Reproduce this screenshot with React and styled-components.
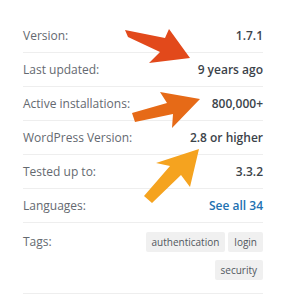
import React from 'react'
import styled, { createGlobalStyle } from 'styled-components'

const Global = createGlobalStyle`
    body {
        margin: 0;
        background: #fff;
        font-family: "Open Sans", "Noto Sans", sans-serif;
    }
    * {
        box-sizing: border-box;
    }
`

const Page = styled.div`
    position: relative;
    width: 288px;
    height: 300px;
    overflow: hidden;
`

const List = styled.ul`
    list-style: none;
    margin: 0;
    padding: 19px 25px 0 23px;
`

const Row = styled.li`
    display: flex;
    justify-content: space-between;
    align-items: ${p => (p.top ? 'flex-start' : 'center')};
    height: ${p => (p.top ? 'auto' : '34px')};
    padding: ${p => (p.top ? '9px 0 13px' : '0')};
    border-bottom: 1px solid #eeeeee;
    font-size: 12px;
`

const Label = styled.span`
    color: #646970;
    line-height: 20px;
`

const Value = styled.strong`
    color: #3c434a;
    font-weight: 600;
`

const Link = styled.a`
    color: #2271b1;
    font-weight: 600;
    text-decoration: none;
`

const Tags = styled.div`
    display: flex;
    flex-wrap: wrap;
    justify-content: flex-end;
    width: 118px;
    column-gap: 3px;
    row-gap: 8px;
`

const Tag = styled.span`
    background: #f0f0f0;
    color: #50575e;
    font-size: 10px;
    line-height: 20px;
    padding: 0 6px;
    border-radius: 2px;
`

const Overlay = styled.svg`
    position: absolute;
    left: 0;
    top: 0;
    pointer-events: none;
`

// arrows drawn over the list, points traced from the screenshot
const arrows = [
    {
        color: '#e2491b',
        points: '125,30 165,38 169,29 190,58 149,63 160,52 128,37',
    },
    {
        color: '#e66a17',
        points: '132,113 167,103 160,92 200,99 172,128 173,114 135,122',
    },
    {
        color: '#f5a31f',
        points: '199,149 156,163 170,166 144,196 152,203 181,175 190,187',
    },
]

const rows = [
    ['Version:', '1.7.1'],
    ['Last updated:', '9 years ago'],
    ['Active installations:', '800,000+'],
    ['WordPress Version:', '2.8 or higher'],
    ['Tested up to:', '3.3.2'],
]

export default function App() {
    return (
        <Page>
            <Global />
            <List>
                {rows.map(([label, value]) => (
                    <Row key={label}>
                        <Label>{label}</Label>
                        <Value>{value}</Value>
                    </Row>
                ))}
                <Row>
                    <Label>Languages:</Label>
                    <Link href="#">See all 34</Link>
                </Row>
                <Row top>
                    <Label>Tags:</Label>
                    <Tags>
                        <Tag>authentication</Tag>
                        <Tag>login</Tag>
                        <Tag>security</Tag>
                    </Tags>
                </Row>
            </List>
            <Overlay width="288" height="300">
                {arrows.map(a => (
                    <polygon key={a.color} points={a.points} fill={a.color} />
                ))}
            </Overlay>
        </Page>
    )
}
